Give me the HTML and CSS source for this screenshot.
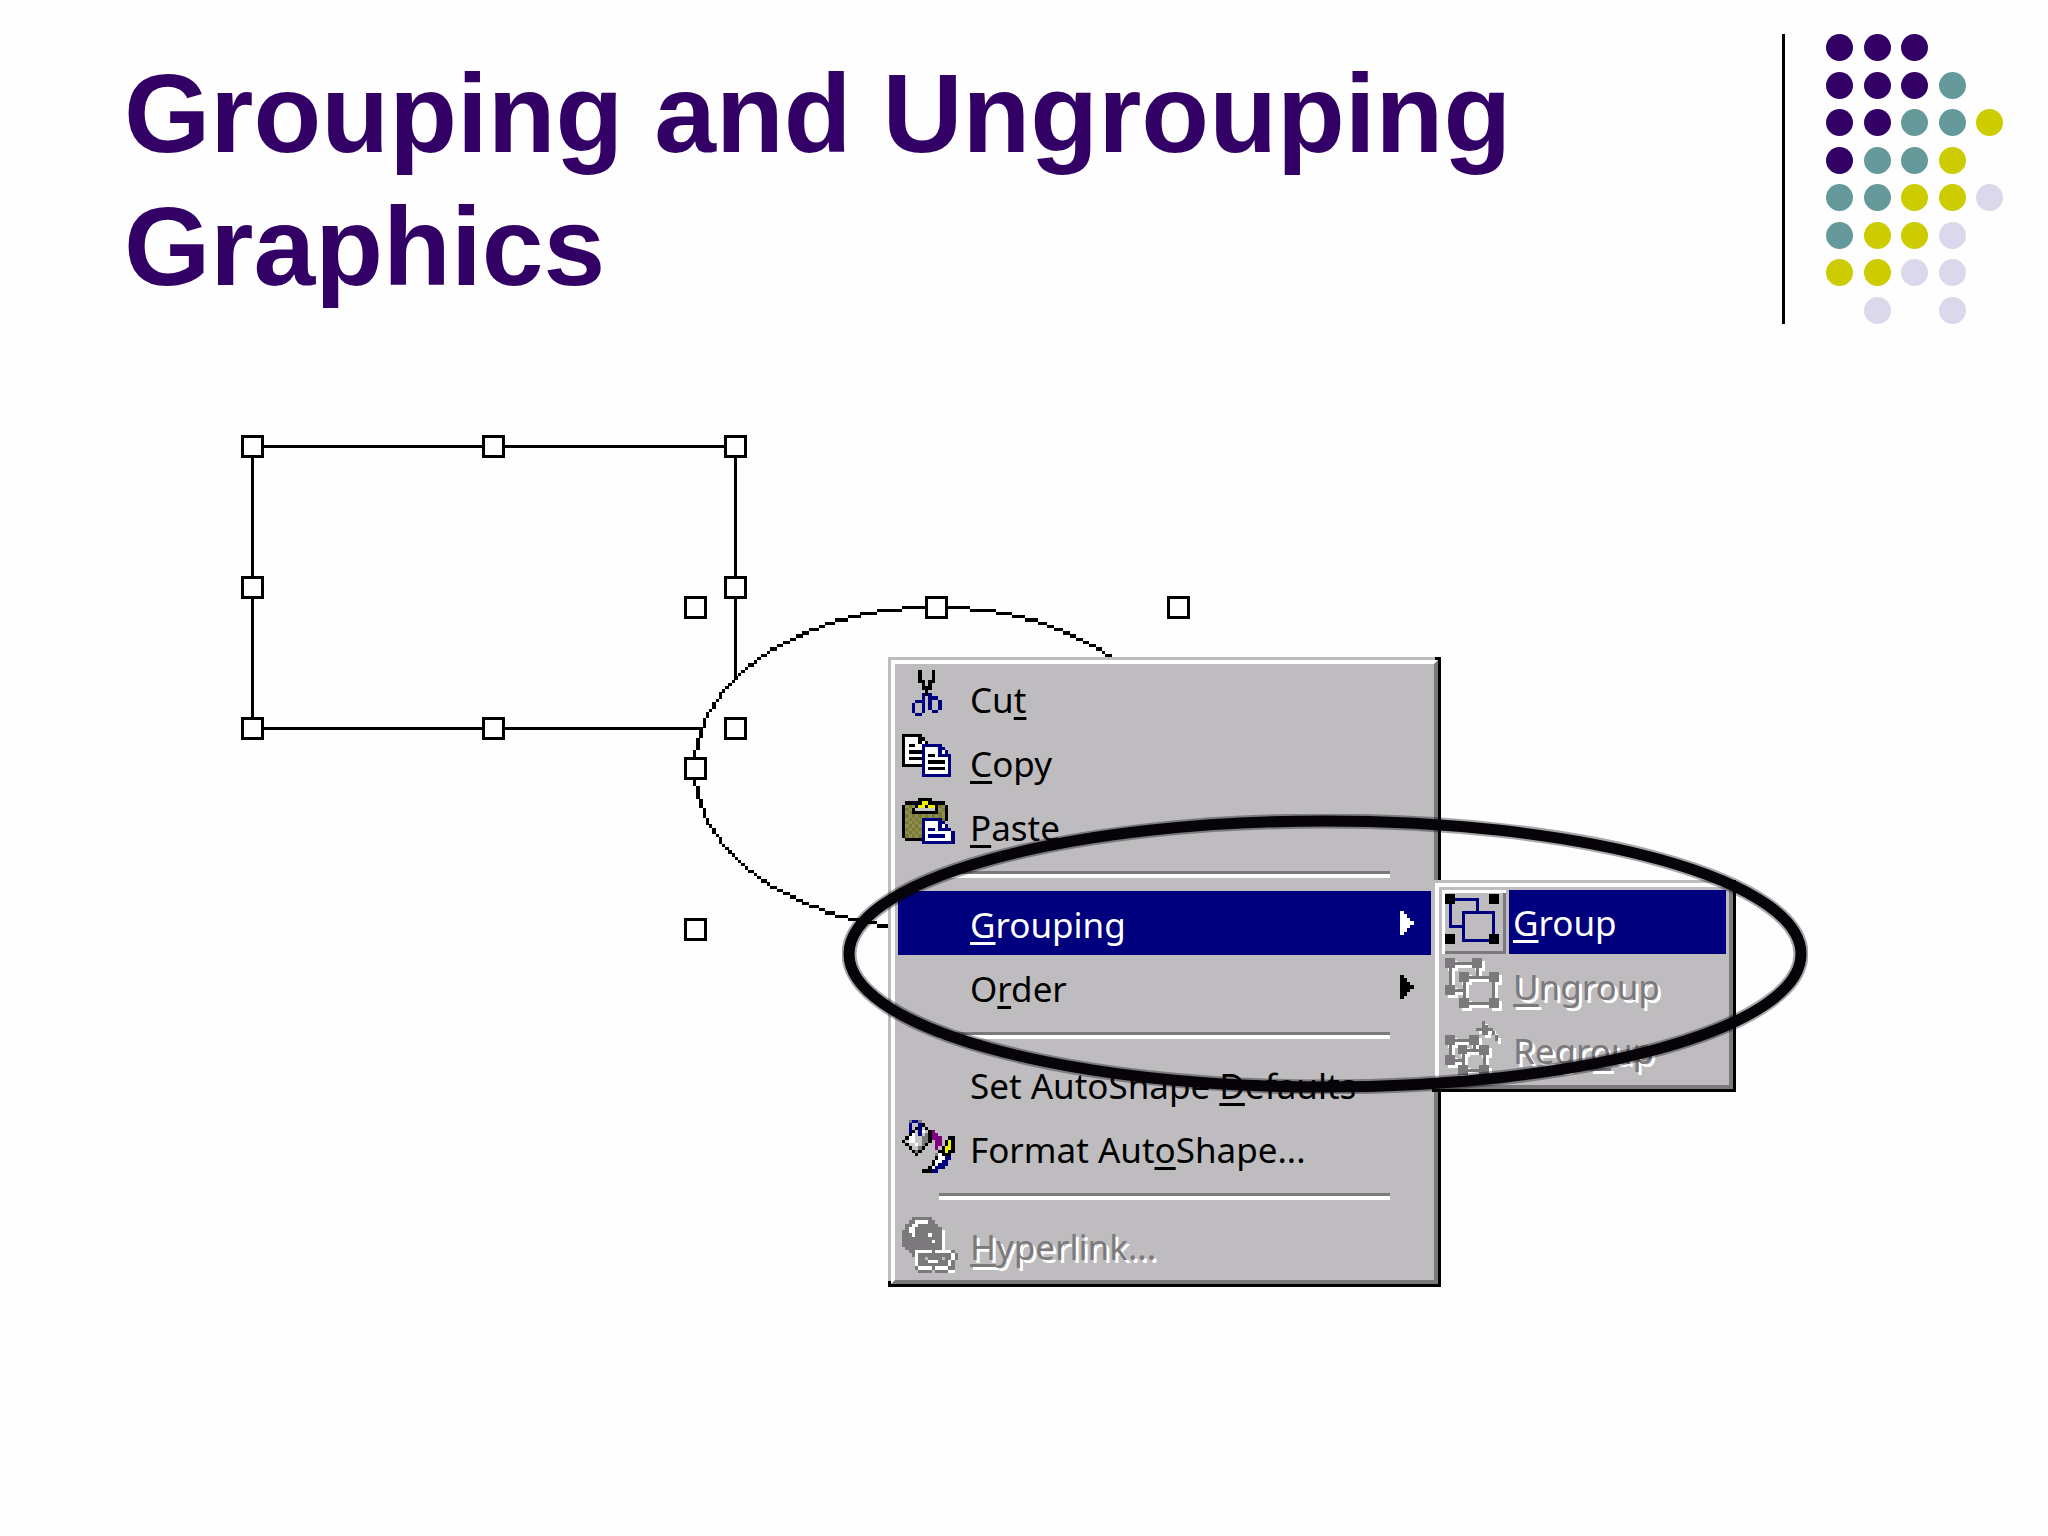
FILE: index.html
```
<!DOCTYPE html>
<html lang="en">
<head>
    <meta charset="UTF-8">
    <title>Grouping and Ungrouping Graphics</title>
    <link rel="stylesheet" href="styles.css">
</head>
<body>
    <header class="slide-header">
        <h1>Grouping and Ungrouping Graphics</h1>
        <div class="dots" id="dots"></div>
    </header>

    <main class="canvas">
        <!-- Selected shapes with their handles -->
        <svg class="shapes" viewBox="240 434 950 510" aria-hidden="true">
            <rect x="252.500" y="446.500" width="483" height="282" fill="none" stroke="#000" stroke-width="3"/>
            <ellipse cx="936" cy="768" rx="241" ry="161" fill="#fefefe"/>
            <g id="oval"></g>
            <g id="handles" fill="#fefefe" stroke="#000" stroke-width="3"></g>
        </svg>

        <div class="menu main-menu">
            <button class="item"><svg class="icon" data-icon="cut"></svg><span class="label">Cu<u>t</u></span></button>
            <button class="item"><svg class="icon" data-icon="copy"></svg><span class="label"><u>C</u>opy</span></button>
            <button class="item"><svg class="icon" data-icon="paste"></svg><span class="label"><u>P</u>aste</span></button>
            <hr>
            <button class="item active"><span class="icon"></span><span class="label"><u>G</u>rouping</span>
                <svg class="arrow" viewBox="0 0 4 7"><path d="M0 0h1v1h1v1h1v1h1v1h-1v1h-1v1h-1v1h-1z"/></svg></button>
            <button class="item"><span class="icon"></span><span class="label">O<u>r</u>der</span>
                <svg class="arrow" viewBox="0 0 4 7"><path d="M0 0h1v1h1v1h1v1h1v1h-1v1h-1v1h-1v1h-1z"/></svg></button>
            <hr>
            <button class="item"><span class="icon"></span><span class="label">Set AutoShape <u>D</u>efaults</span></button>
            <button class="item"><svg class="icon" data-icon="format"></svg><span class="label">Format Aut<u>o</u>Shape...</span></button>
            <hr>
            <button class="item" disabled><svg class="icon" data-icon="link"></svg><span class="label"><u>H</u>yperlink...</span></button>
        </div>

        <div class="menu sub-menu">
            <button class="sub-item selected">
                <svg class="tool" viewBox="0 0 64 64">
                    <path d="M8.500 9.500h27v27h-27z" fill="none" stroke="#00007f" stroke-width="3"/>
                    <path d="M21.500 22.500h30v28h-30z" fill="#bebcbe" stroke="#00007f" stroke-width="3"/>
                    <path d="M3 4h10v10h-10zM47 4h10v10h-10zM3 44h10v10h-10zM47 44h10v10h-10z"/>
                </svg>
                <span class="label"><u>G</u>roup</span>
            </button>
            <button class="sub-item" disabled>
                <svg class="tool" viewBox="0 0 64 64">
                    <defs>
                        <g id="ungroup">
                            <path d="M8.500 9.500h27v14M8.500 9.500v27h14M22.500 23.500h29v26h-29z" fill="none" stroke="currentColor" stroke-width="3"/>
                            <path d="M3 4h10v10h-10zM30 4h10v10h-10zM3 31h10v10h-10zM17 18h10v10h-10zM47 18h10v10h-10zM17 44h10v10h-10zM47 44h10v10h-10z" fill="currentColor"/>
                        </g>
                    </defs>
                    <use href="#ungroup" x="3" y="3" color="#fff"/>
                    <use href="#ungroup"/>
                </svg>
                <span class="label"><u>U</u>ngroup</span>
            </button>
            <button class="sub-item" disabled>
                <svg class="tool" viewBox="0 0 64 64">
                    <defs>
                        <g id="regroup">
                            <path d="M8.500 22.500h24v10M8.500 22.500v20h12M21.500 32.500h21v20h-21z" fill="none" stroke="currentColor" stroke-width="3"/>
                            <path d="M3 17h10v10h-10zM27 17h10v10h-10zM3 37h10v10h-10zM16 27h9v9h-9zM37 27h10v10h-10zM16 47h10v10h-10zM37 47h10v10h-10z" fill="currentColor"/>
                            <path d="M40 3h3v4h3v3h5v3h-5v4h-6v-4h-6v-3h6zM50 13h3v4h3v6h-3v-6h-3z" fill="currentColor"/>
                        </g>
                    </defs>
                    <use href="#regroup" x="3" y="3" color="#fff"/>
                    <use href="#regroup"/>
                </svg>
                <span class="label">Regr<u>o</u>up</span>
            </button>
        </div>

        <!-- Ring that points out the Grouping submenu -->
        <svg class="callout" viewBox="0 0 966 280" aria-hidden="true">
            <g fill="none" stroke="#060408">
                <ellipse cx="483" cy="140" rx="476" ry="133" stroke-width="15" opacity=".35"/>
                <ellipse cx="483" cy="140" rx="476" ry="133" stroke-width="11"/>
            </g>
        </svg>
    </main>
    <script src="script.js"></script>
</body>
</html>
```
FILE: styles.css
```
body {
    display: flex;
    flex-direction: column;
    min-height: 100vh;
    margin: 0;
    background: #fefefe;
    font-family: "Liberation Sans", Arial, sans-serif;
}

.slide-header {
    display: flex;
    align-items: flex-start;
    padding: 34px 45px 0 124px;
}

h1 {
    flex: 1;
    margin: 0;
    padding: 14px 200px 0 0;
    font-size: 111px;
    line-height: 133px;
    color: #330066;
}

/* Dot pattern with the rule on its left */
.dots {
    display: grid;
    grid-template-columns: repeat(5, 27px);
    grid-template-rows: repeat(8, 27px);
    justify-content: space-between;
    align-content: space-between;
    width: 177px;
    height: 290px;
    padding-left: 41px;
    border-left: 3px solid #000;
}

.dot {
    border-radius: 50%;
}

.dot-p { background: #330066; }
.dot-t { background: #669999; }
.dot-y { background: #cccc00; }
.dot-l { background: #dad8ea; }

.canvas {
    position: relative;
    flex: 1;
    min-height: 1000px;
}

.shapes {
    position: absolute;
    left: 240px;
    top: 110px;
    width: 950px;
    height: 510px;
    shape-rendering: crispEdges;
}

/* Raised menu panels */
.menu {
    position: absolute;
    box-sizing: border-box;
    padding: 3px;
    background: #bebcbe;
    border: 4px solid;
    border-color: #fff #7b797b #7b797b #fff;
    box-shadow: -3px -3px 0 #bebcbe, 3px 3px 0 #000, 3px -3px 0 #000, -3px 3px 0 #000;
}

.main-menu {
    left: 891px;
    top: 336px;
    width: 547px;
    padding-top: 2px;
}

.sub-menu {
    left: 1435px;
    top: 559px;
    width: 298px;
}

.menu button {
    display: flex;
    align-items: center;
    width: 100%;
    height: 64px;
    padding: 0;
    border: 0;
    background: none;
    color: #000;
    font-family: "Noto Sans", sans-serif;
    font-size: 35px;
    text-align: left;
    white-space: nowrap;
}

.menu u {
    text-decoration-thickness: 3px;
    text-underline-offset: 4px;
    text-decoration-skip-ink: none;
}

.menu button:disabled {
    color: #7b797b;
    text-shadow: 3px 3px 0 #fff;
}

.menu button.item {
    gap: 12px;
    padding: 0 17px 0 4px;
}

.menu .item.active {
    background: #00007f;
    color: #fff;
}

.menu svg {
    flex: none;
    shape-rendering: crispEdges;
}

.label {
    padding-top: 2px;
}

.icon {
    width: 56px;
    height: 56px;
}

.arrow {
    width: 14px;
    height: 24px;
    margin-left: auto;
    fill: currentColor;
}

.menu hr {
    height: 0;
    margin: 13px 41px;
    border: 0;
    border-top: 3px solid #7b797b;
    border-bottom: 4px solid #fff;
}

.menu button.sub-item {
    gap: 3px;
}

.tool {
    width: 64px;
    height: 64px;
}

.sub-item .label {
    flex: 1;
    padding-left: 4px;
    line-height: 62px;
}

.selected .tool {
    box-shadow: inset 3px 3px 0 #fff, inset -3px -3px 0 #7b797b;
}

.selected .label {
    background: #00007f;
    color: #fff;
}

.callout {
    position: absolute;
    left: 842px;
    top: 490px;
    width: 966px;
    height: 280px;
}
```
FILE: script.js
```
var colors = { k: "#000", b: "#00007f", w: "#fff", g: "#7b797b", s: "#c8c8c8", y: "#f0f000", o: "#7b7b28", O: "#8d8d5c", p: "#800080" };

var icons = {
    cut: [
        ".....k...k",
        ".....k...k",
        ".....k...k",
        ".....kk.kk",
        "......k.k",
        "......kkk",
        ".......k",
        "......bkb",
        "......b.bbb",
        "....bbb.b..b",
        "...b..b.b..b",
        "...b..b.b..b",
        "...b..b..bb",
        "....bb"
    ],
    copy: [
        "kkkkkk",
        "kwwwwkk",
        "kwwwwkwk",
        "kwkkwwbbbbbb",
        "kwwwwwbwwwwbb",
        "kwkkkkbwwwwbwb",
        "kwwwwwbwkkwbbbb",
        "kwkkkkbwwwwwwwb",
        "kwwwwwbwkkkkkwb",
        "kkkkkkbwwwwwwwb",
        "......bwkkkkkwb",
        "......bwwwwwwwb",
        "......bbbbbbbbb"
    ],
    paste: [
        ".....kkkk",
        ".kkkkkyykkkkk",
        "kOoOkyykyykoOk",
        "koOksssssskOok",
        "kOokkkkkkkkoOk",
        "koOoOoOoOoOoOk",
        "kOoOoObbbbbbok",
        "koOoOobwwwwbb",
        "kOoOoObwwwwbwb",
        "koOoOobwbbwbbbb",
        "kOoOoObwwwwwwwwb",
        "koOoOobwbbbbbwwb",
        ".kkkkkbwwwwwwwwb",
        "......bbbbbbbbbb"
    ],
    format: [
        "..gbbg",
        "..b..bk",
        "..b.kbsk",
        "..bksbwskp",
        "..kwsbsgkpp",
        ".kwwssggkppp..kk",
        "kswwssggk.pp.kyk",
        ".ksswsgk..pp.kyk",
        "..kssgk...p.kyyk",
        "...kgk.....kkykk",
        "....k.....gwkkk",
        "..........kwwbb",
        ".........kwwbb",
        ".........kwbbb",
        "........kwbbb",
        "......kkkbb"
    ],
    link: [
        "...gggggg",
        "..ggwwwwgg",
        ".ggwwgggggg",
        ".gwwgggggggg",
        "ggwwggggggggw",
        "gggwggggwgggw",
        "ggggggggggggw",
        "gggggggggwggw",
        "ggggggggggggw",
        ".gggggggggggw",
        "..ggwwwwwgwwwwwg",
        "...gwggggggggggwg",
        "....wgg.gggg.ggwg",
        "....wgggwwwgggwg",
        "....wgggggggggwg",
        "....gwwwwgwwwwgg",
        ".....gggg.ggggww"
    ]
};

// One square for each cell of the map
Object.keys(icons).forEach(function (name) {
    var svg = document.querySelector('[data-icon="' + name + '"]');
    var cells = "";
    icons[name].forEach(function (row, y) {
        row.split("").forEach(function (c, x) {
            if (c !== ".") {
                cells += '<rect x="' + x + '" y="' + y + '" width="1" height="1" fill="' + colors[c] + '"/>';
            }
        });
    });
    svg.setAttribute("viewBox", "0 0 17 17");
    svg.innerHTML = cells;
});

// Dot pattern of the header
var dots = ["ppp..", "pppt.", "pptty", "ptty.", "ttyyl", "tyyl.", "yyll.", ".l.l."];
document.getElementById("dots").innerHTML = dots.join("").split("").map(function (c) {
    return c === "." ? "<i></i>" : '<i class="dot dot-' + c + '"></i>';
}).join("");

// Handles of the rectangle and of the oval
var handles = [
    [252, 446], [493, 446], [735, 446], [252, 587], [735, 587], [252, 728], [493, 728], [735, 728],
    [695, 607], [936, 607], [1178, 607], [695, 768], [695, 929]
];
document.getElementById("handles").innerHTML = handles.map(function (h) {
    return '<rect x="' + (h[0] - 9.5) + '" y="' + (h[1] - 9.5) + '" width="20" height="20"/>';
}).join("");

// Stepped outline of the oval, drawn cell by cell
var step = 3.22;
var path = "";
function cell(x, y) {
    path += "M" + (934.5 + x * step) + " " + (766.5 + y * step) + "h3.3v3.3h-3.3z";
}
for (var x = -75; x <= 75; x++) {
    var y = Math.round(50 * Math.sqrt(1 - x * x / 5625));
    if (Math.abs(x) < 62) {
        cell(x, y);
        cell(x, -y);
    }
}
for (var r = -50; r <= 50; r++) {
    var w = Math.round(75 * Math.sqrt(1 - r * r / 2500));
    if (w >= 62) {
        cell(w, r);
        cell(-w, r);
    }
}
document.getElementById("oval").innerHTML = '<path d="' + path + '"/>';
```
